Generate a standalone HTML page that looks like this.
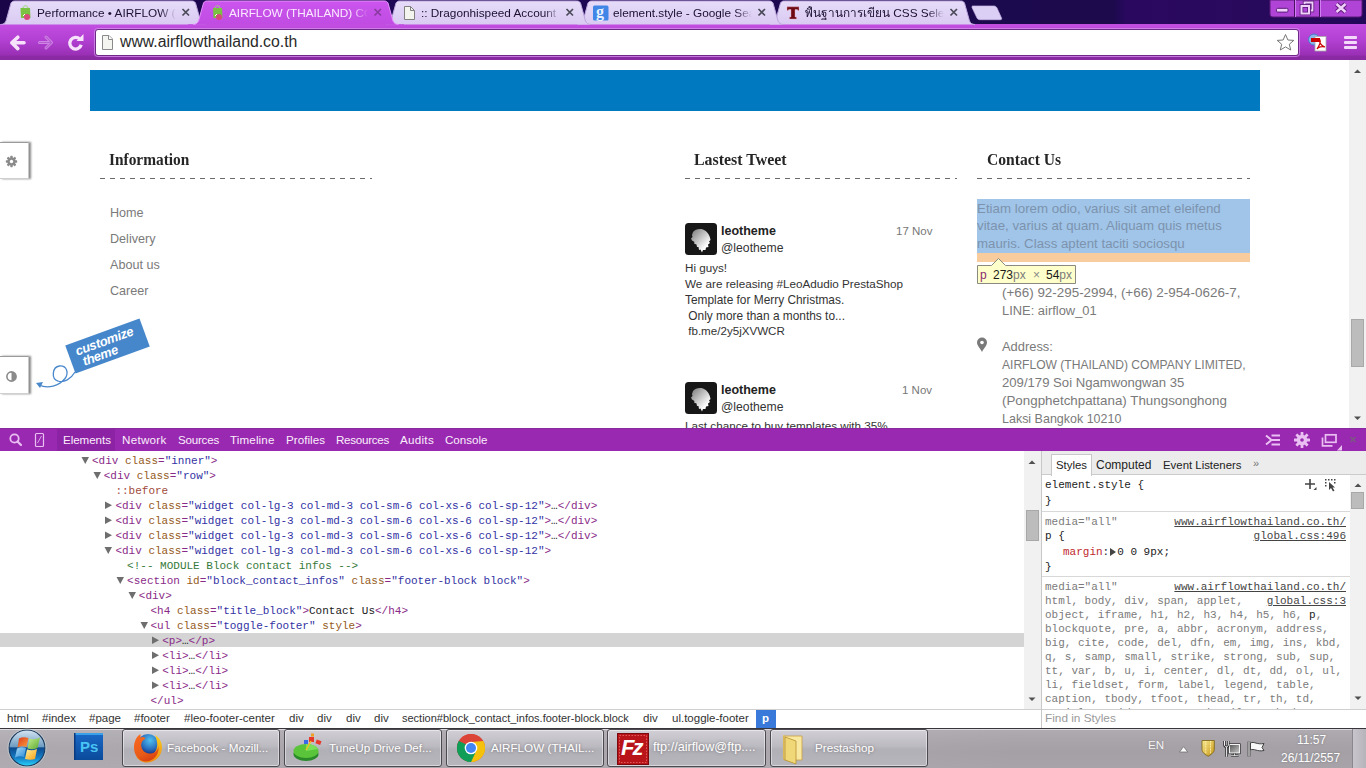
<!DOCTYPE html>
<html><head><meta charset="utf-8">
<style>
*{margin:0;padding:0;box-sizing:border-box}
html,body{width:1366px;height:768px;overflow:hidden;background:#fff;font-family:"Liberation Sans",sans-serif}
.a{position:absolute;white-space:nowrap}
</style></head><body>
<svg class="a" style="left:0;top:0" width="1366" height="60" viewBox="0 0 1366 60">
<defs>
<linearGradient id="gi" x1="0" y1="0" x2="0" y2="1"><stop offset="0" stop-color="#e6dcf9"/><stop offset="1" stop-color="#d9caf2"/></linearGradient>
<linearGradient id="ga" x1="0" y1="0" x2="0" y2="1"><stop offset="0" stop-color="#cb55ee"/><stop offset="1" stop-color="#c04ce2"/></linearGradient>
<linearGradient id="gt" x1="0" y1="0" x2="0" y2="1"><stop offset="0" stop-color="#c24ee2"/><stop offset="0.45" stop-color="#b240d2"/><stop offset="0.85" stop-color="#9a30b6"/><stop offset="0.9" stop-color="#8c2aa4"/><stop offset="1" stop-color="#862a9e"/></linearGradient>
<linearGradient id="fr" x1="0" y1="0" x2="1" y2="0"><stop offset="0" stop-color="#1a0548"/><stop offset="0.3" stop-color="#1e0856"/><stop offset="0.5" stop-color="#1c0752"/><stop offset="0.74" stop-color="#1c0a4e"/><stop offset="0.815" stop-color="#1c0a4c"/><stop offset="0.825" stop-color="#2a0860"/><stop offset="0.92" stop-color="#280a5c"/><stop offset="1" stop-color="#220858"/></linearGradient>
</defs>
<rect x="0" y="0" width="1366" height="25" fill="url(#fr)"/>
<rect x="0" y="24" width="1366" height="36" fill="url(#gt)"/>
<rect x="0" y="59" width="1366" height="1" fill="#8a2aa2"/>
<path d="M770.0,24.5 C773.0,24.5 774.5,23 775.5,21 L780.5,3 C781.5,1.5 782.5,1 784.5,1 L960.5,1 C962.5,1 963.5,1.5 964.5,3 L969.5,21 C970.5,23 972.0,24.5 975.0,24.5 Z" fill="url(#gi)"/><path d="M770.0,24.5 C773.0,24.5 774.5,23 775.5,21 L780.5,3 C781.5,1.5 782.5,1 784.5,1 L960.5,1 C962.5,1 963.5,1.5 964.5,3 L969.5,21 C970.5,23 972.0,24.5 975.0,24.5" fill="none" stroke="#bca6dc" stroke-width="1"/>
<path d="M577.5,24.5 C580.5,24.5 582.0,23 583.0,21 L588,3 C589,1.5 590,1 592,1 L769,1 C771,1 772,1.5 773,3 L778.0,21 C779.0,23 780.5,24.5 783.5,24.5 Z" fill="url(#gi)"/><path d="M577.5,24.5 C580.5,24.5 582.0,23 583.0,21 L588,3 C589,1.5 590,1 592,1 L769,1 C771,1 772,1.5 773,3 L778.0,21 C779.0,23 780.5,24.5 783.5,24.5" fill="none" stroke="#bca6dc" stroke-width="1"/>
<path d="M385.5,24.5 C388.5,24.5 390.0,23 391.0,21 L396,3 C397,1.5 398,1 400,1 L576.5,1 C578.5,1 579.5,1.5 580.5,3 L585.5,21 C586.5,23 588.0,24.5 591.0,24.5 Z" fill="url(#gi)"/><path d="M385.5,24.5 C388.5,24.5 390.0,23 391.0,21 L396,3 C397,1.5 398,1 400,1 L576.5,1 C578.5,1 579.5,1.5 580.5,3 L585.5,21 C586.5,23 588.0,24.5 591.0,24.5" fill="none" stroke="#bca6dc" stroke-width="1"/>
<path d="M0.5,24.5 C3.5,24.5 5.0,23 6.0,21 L11,3 C12,1.5 13,1 15,1 L191.5,1 C193.5,1 194.5,1.5 195.5,3 L200.5,21 C201.5,23 203.0,24.5 206.0,24.5 Z" fill="url(#gi)"/><path d="M0.5,24.5 C3.5,24.5 5.0,23 6.0,21 L11,3 C12,1.5 13,1 15,1 L191.5,1 C193.5,1 194.5,1.5 195.5,3 L200.5,21 C201.5,23 203.0,24.5 206.0,24.5" fill="none" stroke="#bca6dc" stroke-width="1"/>
<rect x="188" y="24.3" width="216" height="2" fill="#c24ee2"/><path d="M193.0,24.5 C196.0,24.5 197.5,23 198.5,21 L203.5,3 C204.5,1.5 205.5,1 207.5,1 L384,1 C386,1 387,1.5 388,3 L393.0,21 C394.0,23 395.5,24.5 398.5,24.5 Z" fill="url(#ga)"/><path d="M193.0,24.5 C196.0,24.5 197.5,23 198.5,21 L203.5,3 C204.5,1.5 205.5,1 207.5,1 L384,1 C386,1 387,1.5 388,3 L393.0,21 C394.0,23 395.5,24.5 398.5,24.5" fill="none" stroke="#e592fa" stroke-width="1"/>

<!-- new tab -->
<path d="M973,6 L994,6 C995.5,6 996.5,7 997,8 L1001.5,18 C1002,19 1001.5,19.7 1000.5,19.7 L980,19.7 C978.5,19.7 977.5,19 977,18 L972,7.5 C971.7,6.7 972,6 973,6 Z" fill="#dccff5" stroke="#c6b4e6" stroke-width="0.7"/>
<!-- window controls -->
<path d="M1270,0 L1362,0 L1362,14 C1362,16 1361,17 1359,17 L1273,17 C1271,17 1270,16 1270,14 Z" fill="#b044d6" stroke="#5a1a78" stroke-width="1"/>
<line x1="1294.5" y1="0" x2="1294.5" y2="17" stroke="#4a1064" stroke-width="1"/>
<line x1="1295.5" y1="0" x2="1295.5" y2="17" stroke="#d080f0" stroke-width="1"/>
<line x1="1319.5" y1="0" x2="1319.5" y2="17" stroke="#4a1064" stroke-width="1"/>
<line x1="1320.5" y1="0" x2="1320.5" y2="17" stroke="#d080f0" stroke-width="1"/>
<rect x="1276.5" y="8.3" width="11.5" height="3.8" rx="1.2" fill="#f0d0fa" stroke="#5a1a78" stroke-width="1"/>
<path d="M1304.5,4.5 L1304.5,2.5 L1312.5,2.5 L1312.5,10.5 L1310.5,10.5" fill="none" stroke="#5a1a78" stroke-width="3.4"/>
<path d="M1304.5,4.5 L1304.5,2.5 L1312.5,2.5 L1312.5,10.5 L1310.5,10.5" fill="none" stroke="#f0d0fa" stroke-width="1.8"/>
<rect x="1301.5" y="6" width="7.5" height="7.5" fill="none" stroke="#5a1a78" stroke-width="3.6"/>
<rect x="1301.5" y="6" width="7.5" height="7.5" fill="none" stroke="#f0d0fa" stroke-width="2"/>
<path d="M1336.5,4 L1345.5,12 M1345.5,4 L1336.5,12" stroke="#5a1a78" stroke-width="4.4"/>
<path d="M1336.5,4 L1345.5,12 M1345.5,4 L1336.5,12" stroke="#f0d0fa" stroke-width="2.6"/>
<!-- omnibox -->
<rect x="94.5" y="28.5" width="1205" height="28" rx="3" fill="none" stroke="#d48cec" stroke-width="1" opacity="0.8"/><rect x="95.5" y="29.5" width="1203" height="26" rx="2.5" fill="#fff" stroke="#6e2886" stroke-width="1"/>
<!-- back -->
<path d="M24,42.8 L12.5,42.8 M17.8,37.2 L11.8,42.8 L17.8,48.6" fill="none" stroke="#f6e2fa" stroke-width="3.6" stroke-linecap="round" stroke-linejoin="round"/>
<!-- forward -->
<path d="M39.5,42.5 L51,42.5 M46,37 L51.5,42.5 L46,48" fill="none" stroke="#cf86e4" stroke-width="3" stroke-linecap="round" stroke-linejoin="round"/>
<path d="M39.5,42.5 L51,42.5 M46,37 L51.5,42.5 L46,48" fill="none" stroke="#b85ed2" stroke-width="1.2" stroke-linecap="round" stroke-linejoin="round"/>
<!-- reload -->
<path d="M79.8,39.2 A5.8,5.8 0 1 0 81.2,44.8" fill="none" stroke="#f6e2fa" stroke-width="3.3"/>
<path d="M76.5,41 L83.5,41 L83.5,34 Z" fill="#f6e2fa"/>
<!-- page icon -->
<path d="M102.5,35.5 L109,35.5 L112.5,39 L112.5,49.5 L102.5,49.5 Z" fill="#f4f4f0" stroke="#8a8a8a" stroke-width="1"/>
<path d="M108.5,35.5 L108.5,39.5 L112.5,39.5" fill="#fff" stroke="#8a8a8a" stroke-width="1"/>
<!-- star -->
<path d="M1285.5,34.5 L1287.9,40 L1293.8,40.4 L1289.3,44.2 L1290.7,50 L1285.5,46.9 L1280.3,50 L1281.7,44.2 L1277.2,40.4 L1283.1,40 Z" fill="#fff" stroke="#777" stroke-width="1"/>
<!-- pdf ext icon -->
<circle cx="1314" cy="39.5" r="5.5" fill="#8ab4e8" stroke="#4a78c8" stroke-width="1"/>
<rect x="1315" y="36.5" width="11" height="14.5" fill="#fff" stroke="#aaa" stroke-width="0.8"/>
<rect x="1311" y="38" width="9" height="4" fill="#c00"/>
<path d="M1317,49 C1319,46 1321,42 1320,40 C1319,42 1321,46 1325,47 C1322,46 1318,47 1317,49 Z" fill="none" stroke="#c00" stroke-width="1.2"/>
<!-- menu -->
<rect x="1344" y="36" width="13" height="3" rx="1" fill="#f4d8fa"/>
<rect x="1344" y="41" width="13" height="3" rx="1" fill="#f4d8fa"/>
<rect x="1344" y="46" width="13" height="3" rx="1" fill="#f4d8fa"/>
<!-- tab favicons -->
<g><path d="M20.5,8 L30,8 L30.5,18 L21,18 Z" fill="#7cc242"/><path d="M23,8 C23,5 28,5 28,8" fill="none" stroke="#9ad870" stroke-width="1"/><circle cx="27" cy="17" r="3" fill="#d84a7a"/><path d="M23,16 L25,14" stroke="#fff" stroke-width="1"/></g>
<g><path d="M213,8 L222,8 L222.5,18 L213.5,18 Z" fill="#7cc242"/><path d="M215,8 C215,5 220,5 220,8" fill="none" stroke="#9ad870" stroke-width="1"/><circle cx="219" cy="17" r="3" fill="#d84a7a"/><path d="M215,16 L217,14" stroke="#fff" stroke-width="1"/></g>
<path d="M404.5,6.5 L410.5,6.5 L414.5,10.5 L414.5,19.5 L404.5,19.5 Z" fill="#f4f4ee" stroke="#808080" stroke-width="1"/>
<path d="M410.5,6.5 L410.5,10.5 L414.5,10.5" fill="none" stroke="#808080" stroke-width="1"/>
<rect x="593" y="5.5" width="15.5" height="15" rx="1.5" fill="#3f86e6"/>
</svg>
<div class="a" style="left:596px;top:3px;font:bold 16px 'Liberation Serif',serif;color:#e8f2ff">g</div>
<svg class="a" style="left:780px;top:0" width="24" height="24"><path d="M7,6.8 L19,6.8 L19,10.5 L18,10.5 L17.3,9.5 L15,9.5 L15,17 L16.5,17 L16.5,19 L9.5,19 L9.5,17 L11,17 L11,9.5 L8.7,9.5 L8,10.5 L7,10.5 Z" fill="#6e0a14" stroke="#e8b0c0" stroke-width="0.4"/></svg>
<style>
.tt{position:absolute;top:6px;height:16px;overflow:hidden;font-size:11.8px;line-height:14px;white-space:nowrap;color:#1b1030;-webkit-mask-image:linear-gradient(90deg,#000 calc(100% - 18px),transparent calc(100% - 2px))}
.tx{position:absolute;top:8px;width:8px;height:8px}
</style>
<div class="tt" style="left:37px;width:141px">Performance • AIRFLOW (THAILAND)</div>
<div class="tt" style="left:229px;width:141px;color:#fbeaff">AIRFLOW (THAILAND) COMPANY</div>
<div class="tt" style="left:421px;width:141px">:: Dragonhispeed Account ::</div>
<div class="tt" style="left:613px;width:141px">element.style - Google Search</div>
<div class="tt" style="left:805px;width:141px">พื้นฐานการเขียน CSS Selector</div>
<svg class="a" style="left:0;top:0" width="1000" height="24">
<path d="M182.5,9 L189,15.5 M189,9 L182.5,15.5" stroke="#4a4a58" stroke-width="1.7"/>
<path d="M374.5,9 L381,15.5 M381,9 L374.5,15.5" stroke="#8a3aa0" stroke-width="1.7"/>
<path d="M566.5,9 L573,15.5 M573,9 L566.5,15.5" stroke="#4a4a58" stroke-width="1.7"/>
<path d="M758.5,9 L765,15.5 M765,9 L758.5,15.5" stroke="#4a4a58" stroke-width="1.7"/>
<path d="M950.5,9 L957,15.5 M957,9 L950.5,15.5" stroke="#4a4a58" stroke-width="1.7"/>
</svg>
<div class="a" style="left:120px;top:33px;font-size:15.8px;line-height:18px;color:#2a2a2a">www.airflowthailand.co.th</div>
<style>
.pg{position:absolute;white-space:nowrap}
.h4{font:bold 15.6px/20px "Liberation Serif",serif;color:#262626;transform:scaleY(1.08);transform-origin:0 100%}
.lk{font-size:12.6px;line-height:16px;color:#7a7a7a}
.tw{font-size:11.7px;line-height:16px;color:#333}
.ct{font-size:12.3px;line-height:18px;color:#7a7a7a}
.dash{position:absolute;height:1px;background:repeating-linear-gradient(90deg,#6a6a6a 0 5px,transparent 5px 10px)}
</style>
<div class="pg" style="left:90px;top:70px;width:1170px;height:41px;background:#0079c1"></div>
<!-- left tool boxes -->
<div class="pg" style="left:0;top:142px;width:29px;height:37px;background:#fff;border-top:1.5px solid #9a9a9a;border-bottom:1px solid #cfcfcf;border-right:1px solid #c8c8c8;box-shadow:2px 0 2px 0 #8a8a8a"></div>
<svg class="pg" style="left:5px;top:155px" width="14" height="14" viewBox="0 0 14 14">
<g fill="#8a8a8a"><circle cx="6.5" cy="6.5" r="4"/>
<rect x="5.3" y="0.8" width="2.4" height="11.4" rx="0.6"/><rect x="0.8" y="5.3" width="11.4" height="2.4" rx="0.6"/>
<rect x="5.3" y="0.8" width="2.4" height="11.4" rx="0.6" transform="rotate(45 6.5 6.5)"/><rect x="5.3" y="0.8" width="2.4" height="11.4" rx="0.6" transform="rotate(-45 6.5 6.5)"/></g>
<circle cx="6.5" cy="6.5" r="1.7" fill="#fff"/></svg>
<div class="pg" style="left:0;top:356px;width:29px;height:38px;background:#fff;border-top:1.5px solid #9a9a9a;border-bottom:1px solid #cfcfcf;border-right:1px solid #c8c8c8;box-shadow:2px 0 2px 0 #8a8a8a"></div>
<svg class="pg" style="left:5px;top:370px" width="14" height="14" viewBox="0 0 14 14">
<circle cx="6.5" cy="6.5" r="4.6" fill="none" stroke="#8a8a8a" stroke-width="1.6"/><path d="M6.5,1.9 A4.6,4.6 0 0 1 6.5,11.1 Z" fill="#8a8a8a"/></svg>
<!-- customize theme -->
<div class="pg" style="left:68px;top:331px;width:79px;height:30px;background:#4687cc;transform:rotate(-20deg)"></div><div class="pg" style="left:73px;top:331px;width:79px;height:30px;transform:rotate(-20deg);color:#fff;font:bold italic 13px/12px 'Liberation Sans',sans-serif;padding:2px 0 0 3px;letter-spacing:-0.3px">customize<br>&nbsp;theme</div>
<svg class="pg" style="left:30px;top:360px" width="50" height="35" viewBox="30 360 50 35">
<path d="M75,372 C71,379 64,383 58,381 C51,379 52,367 59.5,366 C67,365.5 69,373 65,378.5 C59,386 48,389 39,385" fill="none" stroke="#4a88cc" stroke-width="1.3"/>
<path d="M36,383 L43,382 L40,388 Z" fill="#4a88cc"/>
</svg>
<!-- Information -->
<div class="pg h4" style="left:109px;top:150px;font-size:15.4px">Information</div>
<div class="dash" style="left:100px;top:178px;width:272px"></div>
<div class="pg lk" style="left:110px;top:205px">Home</div>
<div class="pg lk" style="left:110px;top:231px">Delivery</div>
<div class="pg lk" style="left:110px;top:257px">About us</div>
<div class="pg lk" style="left:110px;top:283px">Career</div>
<!-- Tweets -->
<div class="pg h4" style="left:694px;top:150px;font-size:15.9px">Lastest Tweet</div>
<div class="dash" style="left:685px;top:178px;width:272px"></div>
<svg class="pg" style="left:685px;top:223px" width="32" height="32" viewBox="0 0 32 32">
<defs><linearGradient id="lion" x1="0.1" y1="0.1" x2="0.7" y2="0.8"><stop offset="0" stop-color="#8a8a8a"/><stop offset="1" stop-color="#fff"/></linearGradient></defs>
<rect width="32" height="32" rx="3.5" fill="#171717"/>
<path d="M8,9 C10,6.5 14,5.5 18,6.5 C22,8 25,12 25.5,17 L24,18.5 L25,20 L23,21.5 L23.5,24 L21,24.5 L20.5,27 L18,27 L17,29.5 L15.5,26.5 L14,27 L13.5,24 L12,24 L11.5,21.5 L9,20.5 L9.5,19 L7,17.5 L6,15.5 L7.5,14 L7,12 Z" fill="url(#lion)"/>
</svg>
<div class="pg" style="left:721px;top:223px;font:bold 12.5px/16px 'Liberation Sans',sans-serif;color:#222">leotheme</div>
<div class="pg tw" style="left:721px;top:240px;font-size:12.2px">@leotheme</div>
<div class="pg" style="left:896px;top:223px;font-size:11.5px;line-height:16px;color:#777">17 Nov</div>
<div class="pg tw" style="left:685px;top:260px;font-size:11.63px">Hi guys!</div><div class="pg tw" style="left:685px;top:276px;font-size:11.7px">We are releasing #LeoAdudio PrestaShop</div><div class="pg tw" style="left:685px;top:292px;font-size:11.9px">Template for Merry Christmas.</div><div class="pg tw" style="left:685px;top:308px;font-size:11.9px">&nbsp;Only more than a months to...</div><div class="pg tw" style="left:685px;top:323px;font-size:11.6px">&nbsp;fb.me/2y5jXVWCR</div>
<svg class="pg" style="left:685px;top:382px" width="32" height="32" viewBox="0 0 32 32">
<rect width="32" height="32" rx="3.5" fill="#171717"/>
<path d="M8,9 C10,6.5 14,5.5 18,6.5 C22,8 25,12 25.5,17 L24,18.5 L25,20 L23,21.5 L23.5,24 L21,24.5 L20.5,27 L18,27 L17,29.5 L15.5,26.5 L14,27 L13.5,24 L12,24 L11.5,21.5 L9,20.5 L9.5,19 L7,17.5 L6,15.5 L7.5,14 L7,12 Z" fill="url(#lion)"/>
</svg>
<div class="pg" style="left:721px;top:382px;font:bold 12.5px/16px 'Liberation Sans',sans-serif;color:#222">leotheme</div>
<div class="pg tw" style="left:721px;top:399px;font-size:12.2px">@leotheme</div>
<div class="pg" style="left:902px;top:382px;font-size:11.5px;line-height:16px;color:#777">1 Nov</div>
<div class="pg tw" style="left:685px;top:418px">Last chance to buy templates with 35%</div>
<!-- Contact -->
<div class="pg h4" style="left:987px;top:150px;font-size:15.6px">Contact Us</div>
<div class="dash" style="left:977px;top:178px;width:273px"></div>
<div class="pg" style="left:977px;top:199px;width:273px;height:54px;background:#a0c5e9"></div>
<div class="pg" style="left:977px;top:253px;width:273px;height:9px;background:#f8cc9c"></div>
<div class="pg ct" style="left:977px;top:200px;font-size:13.34px;color:#7d93ad">Etiam lorem odio, varius sit amet eleifend</div><div class="pg ct" style="left:977px;top:217px;font-size:13.28px;color:#7d93ad">vitae, varius at quam. Aliquam quis metus</div><div class="pg ct" style="left:977px;top:235px;font-size:13.25px;color:#7d93ad">mauris. Class aptent taciti sociosqu</div>
<div class="pg ct" style="left:1002px;top:284px;font-size:13.41px">(+66) 92-295-2994, (+66) 2-954-0626-7,</div><div class="pg ct" style="left:1002px;top:302px;font-size:12.92px">LINE: airflow_01</div>
<svg class="pg" style="left:976px;top:337px" width="12" height="16" viewBox="0 0 12 16">
<path d="M6,15 C4,11 1,8.5 1,5.5 A5,5 0 0 1 11,5.5 C11,8.5 8,11 6,15 Z" fill="#7a7a7a"/><circle cx="6" cy="5.5" r="1.8" fill="#fff"/></svg>
<div class="pg ct" style="left:1002px;top:338px;font-size:12.9px">Address:</div><div class="pg ct" style="left:1002px;top:356px;font-size:12.07px">AIRFLOW (THAILAND) COMPANY LIMITED,</div><div class="pg ct" style="left:1002px;top:374px;font-size:13.14px">209/179 Soi Ngamwongwan 35</div><div class="pg ct" style="left:1002px;top:392px;font-size:13.36px">(Pongphetchpattana) Thungsonghong</div><div class="pg ct" style="left:1002px;top:410px;font-size:12.49px">Laksi Bangkok 10210</div>
<!-- tooltip -->
<svg class="pg" style="left:976px;top:257px" width="101" height="28" viewBox="976 257 101 28">
<path d="M977.5,265.5 L991.5,265.5 L998.5,258.5 L1005.5,265.5 L1075.5,265.5 L1075.5,283.5 L977.5,283.5 Z" fill="#ffffcb" stroke="#8a8a80" stroke-width="1"/>
</svg>
<div class="pg" style="left:980px;top:267px;font-size:12px;line-height:16px;color:#8a2a70">p</div>
<div class="pg" style="left:993px;top:267px;font-size:12px;line-height:16px;color:#1a1a1a">273<span style="color:#7a7a7a">px</span></div>
<div class="pg" style="left:1033px;top:267px;font-size:12px;line-height:16px;color:#8a8a8a">×</div>
<div class="pg" style="left:1046px;top:267px;font-size:12px;line-height:16px;color:#1a1a1a">54<span style="color:#7a7a7a">px</span></div>
<!-- page scrollbar -->
<div class="pg" style="left:1349px;top:60px;width:17px;height:368px;background:#f1f1f1"></div>
<div class="pg" style="left:1351px;top:319px;width:13px;height:48px;background:#bcbcbc;border:1px solid #a8a8a8"></div>
<svg class="pg" style="left:1349px;top:60px" width="17" height="368">
<path d="M5,13 L12,13 L8.5,9.5 Z" fill="#505050"/>
<path d="M5,356.5 L12,356.5 L8.5,360 Z" fill="#505050"/>
</svg>
<style>
.er{position:absolute;white-space:nowrap;font:11px/15px "Liberation Mono",monospace;color:#222}
.t{color:#8a2a88}.n{color:#955a22}.v{color:#3232a4}.c{color:#367a3a}.ps{color:#a04a3a}.k{color:#222}
.dtt{position:absolute;top:432px;font-size:12px;line-height:15px;color:#fbeefc;white-space:nowrap}
.sl{position:absolute;white-space:nowrap;font:11px/14px "Liberation Mono",monospace;color:#222}
.gr{color:#7a7a7a}
.lnk{position:absolute;white-space:nowrap;font:11px/14px "Liberation Mono",monospace;color:#444;text-decoration:underline;text-align:right}
.bc{position:absolute;top:711px;font-size:11.5px;line-height:15px;color:#333;white-space:nowrap}
</style>
<!-- devtools toolbar -->
<div class="a" style="left:0;top:428px;width:1366px;height:23px;background:#9829b0;border-top:1px solid #8a2aa0"></div>
<div class="a" style="left:57px;top:429px;width:58px;height:22px;background:#8c22a4"></div>
<svg class="a" style="left:0;top:428px" width="60" height="23">
<circle cx="14.5" cy="10.5" r="4.2" fill="none" stroke="#eac0f2" stroke-width="1.8"/>
<path d="M17.5,13.5 L21,17" stroke="#eac0f2" stroke-width="2.2" stroke-linecap="round"/>
<rect x="35.5" y="5.5" width="8" height="13" rx="1" fill="none" stroke="#eac0f2" stroke-width="1.2"/>
<path d="M37.5,15 L41.5,8" stroke="#eac0f2" stroke-width="0.8"/>
</svg>
<div class="dtt" style="left:63px;font-size:11.6px;letter-spacing:-0.05px">Elements</div>
<div class="dtt" style="left:122px;font-size:11.6px;letter-spacing:0.28px">Network</div>
<div class="dtt" style="left:178px;font-size:11.6px;letter-spacing:-0.22px">Sources</div>
<div class="dtt" style="left:230px;font-size:11.6px;letter-spacing:0.14px">Timeline</div>
<div class="dtt" style="left:286px;font-size:11.6px;letter-spacing:0.04px">Profiles</div>
<div class="dtt" style="left:336px;font-size:11.6px;letter-spacing:-0.27px">Resources</div>
<div class="dtt" style="left:400px;font-size:11.6px;letter-spacing:0.29px">Audits</div>
<div class="dtt" style="left:445px;font-size:11.6px;letter-spacing:-0.01px">Console</div>
<svg class="a" style="left:1260px;top:428px" width="106" height="23">
<path d="M6,7.5 L11.5,12 L6,16.5" fill="none" stroke="#eac0f2" stroke-width="2"/>
<rect x="11.5" y="6.5" width="8.5" height="2" fill="#eac0f2"/><rect x="11.5" y="11" width="8.5" height="2" fill="#eac0f2"/><rect x="11.5" y="15.5" width="8.5" height="2" fill="#eac0f2"/>
<g fill="#eac0f2" transform="translate(42,12)"><circle r="5.2"/>
<rect x="-1.4" y="-8" width="2.8" height="16" rx="0.5"/><rect x="-8" y="-1.4" width="16" height="2.8" rx="0.5"/>
<rect x="-1.4" y="-8" width="2.8" height="16" rx="0.5" transform="rotate(45)"/><rect x="-1.4" y="-8" width="2.8" height="16" rx="0.5" transform="rotate(-45)"/>
<circle r="1.8" fill="#9829b0"/></g>
<rect x="65.5" y="6.8" width="10.5" height="7.5" fill="none" stroke="#eac0f2" stroke-width="1.7"/>
<path d="M62.5,9.5 L62.5,17.8 L72.5,17.8" fill="none" stroke="#eac0f2" stroke-width="1.7"/>
<path d="M77,22.5 L82,22.5 L82,17 Z" fill="#eac0f2"/>
<path d="M90.5,9 L95.5,14 M95.5,9 L90.5,14" stroke="#7a5a80" stroke-width="1.4"/>
</svg>
<!-- elements pane -->
<div class="a" style="left:0;top:633px;width:1024px;height:14px;background:#d4d4d4"></div>
<div class="er" style="top:454px;left:92.0px"><span class="t">&lt;div</span> <span class="n">class</span><span class="t">=</span><span class="v">"inner"</span><span class="t">&gt;</span></div>
<svg class="a" style="left:81.0px;top:455.5px" width="9" height="9"><path d="M0.5,1 L8,1 L4.25,8 Z" fill="#6e6e6e"/></svg>
<div class="er" style="top:469px;left:103.7px"><span class="t">&lt;div</span> <span class="n">class</span><span class="t">=</span><span class="v">"row"</span><span class="t">&gt;</span></div>
<svg class="a" style="left:92.7px;top:470.5px" width="9" height="9"><path d="M0.5,1 L8,1 L4.25,8 Z" fill="#6e6e6e"/></svg>
<div class="er" style="top:484px;left:115.4px"><span class="ps">::before</span></div>
<div class="er" style="top:499px;left:115.4px"><span class="t">&lt;div</span> <span class="n">class</span><span class="t">=</span><span class="v">"widget col-lg-3 col-md-3 col-sm-6 col-xs-6 col-sp-12"</span><span class="t">&gt;</span><span class="k">…</span><span class="t">&lt;/div&gt;</span></div>
<svg class="a" style="left:104.4px;top:500.5px" width="9" height="9"><path d="M1,0.5 L8,4.25 L1,8 Z" fill="#6e6e6e"/></svg>
<div class="er" style="top:514px;left:115.4px"><span class="t">&lt;div</span> <span class="n">class</span><span class="t">=</span><span class="v">"widget col-lg-3 col-md-3 col-sm-6 col-xs-6 col-sp-12"</span><span class="t">&gt;</span><span class="k">…</span><span class="t">&lt;/div&gt;</span></div>
<svg class="a" style="left:104.4px;top:515.5px" width="9" height="9"><path d="M1,0.5 L8,4.25 L1,8 Z" fill="#6e6e6e"/></svg>
<div class="er" style="top:529px;left:115.4px"><span class="t">&lt;div</span> <span class="n">class</span><span class="t">=</span><span class="v">"widget col-lg-3 col-md-3 col-sm-6 col-xs-6 col-sp-12"</span><span class="t">&gt;</span><span class="k">…</span><span class="t">&lt;/div&gt;</span></div>
<svg class="a" style="left:104.4px;top:530.5px" width="9" height="9"><path d="M1,0.5 L8,4.25 L1,8 Z" fill="#6e6e6e"/></svg>
<div class="er" style="top:544px;left:115.4px"><span class="t">&lt;div</span> <span class="n">class</span><span class="t">=</span><span class="v">"widget col-lg-3 col-md-3 col-sm-6 col-xs-6 col-sp-12"</span><span class="t">&gt;</span></div>
<svg class="a" style="left:104.4px;top:545.5px" width="9" height="9"><path d="M0.5,1 L8,1 L4.25,8 Z" fill="#6e6e6e"/></svg>
<div class="er" style="top:559px;left:127.1px"><span class="c">&lt;!-- MODULE Block contact infos --&gt;</span></div>
<div class="er" style="top:574px;left:127.1px"><span class="t">&lt;section</span> <span class="n">id</span><span class="t">=</span><span class="v">"block_contact_infos"</span> <span class="n">class</span><span class="t">=</span><span class="v">"footer-block block"</span><span class="t">&gt;</span></div>
<svg class="a" style="left:116.1px;top:575.5px" width="9" height="9"><path d="M0.5,1 L8,1 L4.25,8 Z" fill="#6e6e6e"/></svg>
<div class="er" style="top:589px;left:138.8px"><span class="t">&lt;div</span><span class="t">&gt;</span></div>
<svg class="a" style="left:127.8px;top:590.5px" width="9" height="9"><path d="M0.5,1 L8,1 L4.25,8 Z" fill="#6e6e6e"/></svg>
<div class="er" style="top:604px;left:150.5px"><span class="t">&lt;h4</span> <span class="n">class</span><span class="t">=</span><span class="v">"title_block"</span><span class="t">&gt;</span><span class="k">Contact Us</span><span class="t">&lt;/h4&gt;</span></div>
<div class="er" style="top:619px;left:150.5px"><span class="t">&lt;ul</span> <span class="n">class</span><span class="t">=</span><span class="v">"toggle-footer"</span> <span class="n">style</span><span class="t">&gt;</span></div>
<svg class="a" style="left:139.5px;top:620.5px" width="9" height="9"><path d="M0.5,1 L8,1 L4.25,8 Z" fill="#6e6e6e"/></svg>
<div class="er" style="top:634px;left:162.2px"><span class="t">&lt;p</span><span class="t">&gt;</span><span class="k">…</span><span class="t">&lt;/p&gt;</span></div>
<svg class="a" style="left:151.2px;top:635.5px" width="9" height="9"><path d="M1,0.5 L8,4.25 L1,8 Z" fill="#6e6e6e"/></svg>
<div class="er" style="top:649px;left:162.2px"><span class="t">&lt;li</span><span class="t">&gt;</span><span class="k">…</span><span class="t">&lt;/li&gt;</span></div>
<svg class="a" style="left:151.2px;top:650.5px" width="9" height="9"><path d="M1,0.5 L8,4.25 L1,8 Z" fill="#6e6e6e"/></svg>
<div class="er" style="top:664px;left:162.2px"><span class="t">&lt;li</span><span class="t">&gt;</span><span class="k">…</span><span class="t">&lt;/li&gt;</span></div>
<svg class="a" style="left:151.2px;top:665.5px" width="9" height="9"><path d="M1,0.5 L8,4.25 L1,8 Z" fill="#6e6e6e"/></svg>
<div class="er" style="top:679px;left:162.2px"><span class="t">&lt;li</span><span class="t">&gt;</span><span class="k">…</span><span class="t">&lt;/li&gt;</span></div>
<svg class="a" style="left:151.2px;top:680.5px" width="9" height="9"><path d="M1,0.5 L8,4.25 L1,8 Z" fill="#6e6e6e"/></svg>
<div class="er" style="top:694px;left:150.5px"><span class="t">&lt;/ul&gt;</span></div><!-- elements scrollbar -->
<div class="a" style="left:1024px;top:451px;width:17px;height:258px;background:#f1f1f1"></div>
<div class="a" style="left:1026px;top:510px;width:13px;height:31px;background:#bcbcbc;border:1px solid #a8a8a8"></div>
<svg class="a" style="left:1024px;top:451px" width="17" height="258">
<path d="M4.5,13 L11.5,13 L8,9.5 Z" fill="#505050"/>
<path d="M4.5,246.5 L11.5,246.5 L8,250 Z" fill="#505050"/>
</svg>
<div class="a" style="left:1041px;top:451px;width:1px;height:278px;background:#c8c8c8"></div>
<!-- styles pane -->
<div class="a" style="left:1042px;top:451px;width:324px;height:24px;background:#ececec;border-bottom:1px solid #cbcbcb"></div>
<div class="a" style="left:1051px;top:454px;width:41px;height:22px;background:#fff;border:1px solid #c8c8c8;border-bottom:none"></div>
<div class="a" style="left:1056px;top:458px;font-size:11.4px;line-height:15px;color:#222">Styles</div>
<div class="a" style="left:1096px;top:458px;font-size:12px;line-height:15px;color:#222">Computed</div>
<div class="a" style="left:1163px;top:458px;font-size:11.4px;line-height:15px;color:#222">Event Listeners</div>
<div class="a" style="left:1253px;top:456px;font-size:11px;line-height:15px;color:#777">»</div>
<div class="sl" style="left:1045px;top:478px">element.style {</div>
<div class="sl" style="left:1045px;top:494px">}</div>
<svg class="a" style="left:1300px;top:476px" width="40" height="16">
<path d="M10,3 L10,13 M5,8 L15,8" stroke="#444" stroke-width="1.6"/>
<path d="M13.5,14 L16.5,14 L16.5,11 Z" fill="#444"/>
<g fill="#444"><rect x="25" y="3" width="1.5" height="1.5"/><rect x="28" y="3" width="1.5" height="1.5"/><rect x="31" y="3" width="1.5" height="1.5"/><rect x="34" y="3" width="1.5" height="1.5"/><rect x="25" y="6" width="1.5" height="1.5"/><rect x="25" y="9" width="1.5" height="1.5"/><rect x="34" y="6" width="1.5" height="1.5"/></g>
<path d="M29,6 L29,14 L31,12 L33,15.5 L34.5,14.5 L32.5,11.5 L35,11.5 Z" fill="#444"/>
</svg>
<div class="a" style="left:1042px;top:511px;width:308px;height:1px;background:#d8d8d8"></div>
<div class="sl gr" style="left:1045px;top:515px">media="all"</div>
<div class="lnk" style="right:20px;top:515px">www.airflowthailand.co.th/</div>
<div class="sl" style="left:1045px;top:529px">p {</div>
<div class="lnk" style="right:20px;top:529px">global.css:496</div>
<div class="sl" style="left:1045px;top:545px;padding-left:18px"><span style="color:#c0282e">margin</span>:<span style="display:inline-block;width:0;height:0;border-left:6px solid #444;border-top:4px solid transparent;border-bottom:4px solid transparent;margin:0 1px -1px 1px"></span>0 0 9px;</div>
<div class="sl" style="left:1045px;top:560px">}</div>
<div class="a" style="left:1042px;top:576px;width:308px;height:1px;background:#d8d8d8"></div>
<div class="sl gr" style="left:1045px;top:580px">media="all"</div>
<div class="lnk" style="right:20px;top:580px">www.airflowthailand.co.th/</div>
<div class="lnk" style="right:20px;top:594px">global.css:3</div>
<div class="sl gr" style="left:1045px;top:594px">html, body, div, span, applet,<br>object, iframe, h1, h2, h3, h4, h5, h6, <span style="color:#222">p</span>,<br>blockquote, pre, a, abbr, acronym, address,<br>big, cite, code, del, dfn, em, img, ins, kbd,<br>q, s, samp, small, strike, strong, sub, sup,<br>tt, var, b, u, i, center, dl, dt, dd, ol, ul,<br>li, fieldset, form, label, legend, table,<br>caption, tbody, tfoot, thead, tr, th, td,<br>article, aside, canvas, details, embed,</div>
<!-- styles scrollbar -->
<div class="a" style="left:1350px;top:475px;width:16px;height:234px;background:#f1f1f1"></div>
<div class="a" style="left:1351px;top:492px;width:13px;height:17px;background:#bcbcbc;border:1px solid #a8a8a8"></div>
<svg class="a" style="left:1350px;top:475px" width="16" height="234">
<path d="M4.5,12 L11.5,12 L8,8.5 Z" fill="#505050"/>
<path d="M4.5,221.5 L11.5,221.5 L8,225 Z" fill="#505050"/>
</svg>
<div class="a" style="left:1042px;top:709px;width:324px;height:19px;background:#fff;border-top:1px solid #cfcfcf"></div>
<div class="a" style="left:1045px;top:711px;font-size:11.8px;line-height:15px;color:#9a9a9a">Find in Styles</div>
<!-- breadcrumbs -->
<div class="a" style="left:0;top:709px;width:1041px;height:19px;background:#fff;border-top:1px solid #cfcfcf"></div>
<div class="bc" style="left:7px">html</div>
<div class="bc" style="left:42px">#index</div>
<div class="bc" style="left:89px">#page</div>
<div class="bc" style="left:134px">#footer</div>
<div class="bc" style="left:184px">#leo-footer-center</div>
<div class="bc" style="left:289px">div</div>
<div class="bc" style="left:317px">div</div>
<div class="bc" style="left:346px">div</div>
<div class="bc" style="left:374px">div</div>
<div class="bc" style="left:402px;font-size:11px">section#block_contact_infos.footer-block.block</div>
<div class="bc" style="left:643px">div</div>
<div class="bc" style="left:672px">ul.toggle-footer</div>
<div class="a" style="left:756px;top:710px;width:20px;height:18px;background:#3879d9"></div>
<div class="bc" style="left:762px;color:#fff;font-weight:bold">p</div>
<style>
.tb{position:absolute;top:729px;height:38px;border:1px solid #4c4a50;border-radius:3px;background:linear-gradient(#d2d0d6,#bcbac1 45%,#b2b0b7 55%,#b8b6bd);box-shadow:inset 0 0 0 1px rgba(255,255,255,0.45)}
.tbt{position:absolute;top:740px;font-size:11.7px;line-height:15px;color:#fff;white-space:nowrap;text-shadow:0 0 3px rgba(60,60,60,0.6)}
</style>
<div class="a" style="left:0;top:728px;width:1366px;height:40px;background:linear-gradient(90deg,rgba(255,255,255,0.06),rgba(0,0,0,0) 30%,rgba(255,255,255,0.05) 55%,rgba(0,0,0,0.02) 75%),linear-gradient(#b2aeb4,#a9a5ab 40%,#a7a3a9 60%,#aaa6ac);border-top:1px solid #38363a;box-shadow:inset 0 1px 0 #dcdade"></div>
<!-- start orb -->
<svg class="a" style="left:6px;top:728px" width="42" height="40" viewBox="0 0 42 40">
<defs>
<linearGradient id="orb" x1="0" y1="0" x2="0" y2="1"><stop offset="0" stop-color="#d6e6f2"/><stop offset="0.46" stop-color="#6e9cc2"/><stop offset="0.5" stop-color="#0c4a8e"/><stop offset="0.78" stop-color="#1680c8"/><stop offset="1" stop-color="#2ad4fa"/></linearGradient>
<linearGradient id="wr" x1="0" y1="0" x2="1" y2="1"><stop offset="0" stop-color="#e03a1a"/><stop offset="1" stop-color="#f8a040"/></linearGradient>
<linearGradient id="wg" x1="0" y1="0" x2="1" y2="1"><stop offset="0" stop-color="#c8f090"/><stop offset="1" stop-color="#5aa830"/></linearGradient>
<linearGradient id="wb" x1="0" y1="0" x2="1" y2="1"><stop offset="0" stop-color="#a8dcf8"/><stop offset="1" stop-color="#2a8ad8"/></linearGradient>
<linearGradient id="wy" x1="0" y1="0" x2="1" y2="1"><stop offset="0" stop-color="#fff0a0"/><stop offset="1" stop-color="#f8a010"/></linearGradient>
</defs>
<circle cx="21" cy="20" r="18" fill="url(#orb)" stroke="#1c3a5c" stroke-width="1.2"/>
<circle cx="21" cy="20" r="19" fill="none" stroke="#d8e4ec" stroke-width="0.8" opacity="0.7"/>
<path d="M13,10.5 C16,9 19,9 22.5,10 L20.5,19 C17.5,18 14.5,18 11.5,19.5 Z" fill="url(#wr)"/>
<path d="M23.5,10.5 C26.5,11.5 30,11.5 34,9.5 L31.5,20 C28,21.5 25,21.5 21.5,20.5 Z" fill="url(#wg)"/>
<path d="M11,20.5 C14,19 17,19 20,20 L18,29 C15,28 12,28 9,29.5 Z" fill="url(#wb)"/>
<path d="M21,21.5 C24.5,22.5 27.5,22.5 31,21 L29,31 C26,32 23,32 19,31 Z" fill="url(#wy)"/>
</svg>
<!-- PS -->
<svg class="a" style="left:74px;top:732px" width="30" height="30">
<defs><linearGradient id="ps" x1="0" y1="0" x2="0" y2="1"><stop offset="0" stop-color="#1a6ac8"/><stop offset="1" stop-color="#0a4a9a"/></linearGradient></defs>
<rect x="0" y="1" width="29" height="27" fill="url(#ps)"/>
<rect x="0" y="1" width="29" height="2" fill="#3aa0e8"/>
<rect x="0" y="1" width="1.5" height="27" fill="#0a3a80"/>
</svg>
<div class="a" style="left:80px;top:738px;font:bold 15px/18px 'Liberation Sans',sans-serif;color:#48c4f4">Ps</div>
<!-- buttons -->
<div class="tb" style="left:122px;width:158px"></div>
<div class="tb" style="left:284px;width:158px"></div>
<div class="tb" style="left:446px;width:158px"></div>
<div class="tb" style="left:607px;width:159px"></div>
<div class="tb" style="left:770px;width:158px"></div>
<!-- firefox icon -->
<svg class="a" style="left:131px;top:732px" width="32" height="32" viewBox="0 0 32 32">
<defs>
<radialGradient id="ffg" cx="0.6" cy="0.3" r="0.7"><stop offset="0" stop-color="#50c0f0"/><stop offset="0.6" stop-color="#2a70c0"/><stop offset="1" stop-color="#1a2a78"/></radialGradient>
<linearGradient id="ffo" x1="0.2" y1="0" x2="0.6" y2="1"><stop offset="0" stop-color="#f86a20"/><stop offset="0.7" stop-color="#e85a18"/><stop offset="1" stop-color="#d84010"/></linearGradient>
<linearGradient id="ffy" x1="0" y1="0" x2="0" y2="1"><stop offset="0" stop-color="#f8d020"/><stop offset="1" stop-color="#f08a10"/></linearGradient>
</defs>
<circle cx="17" cy="12.5" r="10.5" fill="url(#ffg)"/>
<path d="M24,3 C29,6 31,11 31,15.5 C31,24 24,30.5 16,30.5 C11,30.5 7,28 5,24 C9,27 15,27.5 20,24 C25,21 27,15 26,10 C25.5,7 25,5 24,3 Z" fill="url(#ffy)"/>
<path d="M3,15.5 C3,9 6,4 9.5,2 L9.5,6 C11,4.5 13,5 14.5,6.5 C11.5,8 9.5,11 10.5,15 C11.5,19.5 15.5,22 20,21.5 C24,21 27,18 27.5,14 C28.5,20 25,27 18,29 C10,31 3,25 3,15.5 Z" fill="url(#ffo)"/>
</svg>
<div class="tbt" style="left:167px">Facebook - Mozill...</div>
<!-- tuneup icon -->
<svg class="a" style="left:292px;top:732px" width="34" height="32" viewBox="0 0 34 32">
<ellipse cx="14" cy="22" rx="12.5" ry="7" fill="#2a8a2a"/>
<ellipse cx="14" cy="19" rx="12.5" ry="7" fill="#5ac43a"/>
<path d="M14,19 L14,12 A12.5,7 0 0 1 26,17 Z" fill="#7ae05a"/>
<rect x="17" y="5" width="5" height="5" fill="#e83a2a"/><rect x="24" y="8" width="5" height="4" fill="#e83a2a" transform="rotate(20 26 10)"/>
<rect x="12" y="8" width="4" height="4" fill="#3a6ae8"/><rect x="19" y="1.5" width="3" height="3" fill="#f0a020"/>
<path d="M14,18 L19,9" stroke="#f0c020" stroke-width="1.5"/>
</svg>
<div class="tbt" style="left:329px">TuneUp Drive Def...</div>
<!-- chrome icon -->
<svg class="a" style="left:456px;top:733px" width="30" height="30" viewBox="-15 -15 30 30">
<circle r="14" fill="#db4437"/>
<path d="M0,0 L-12.12,7 A14,14 0 0 1 -12.12,-7 A14,14 0 0 1 12.12,-7 Z" fill="#db4437"/>
<path d="M-12.12,-7 A14,14 0 0 0 0,14 L7,2 Z" fill="#0f9d58"/>
<path d="M12.12,-7 A14,14 0 0 1 0,14 L5,1 Z" fill="#f4c20d"/>
<path d="M0,-6 L12.12,-7 A14,14 0 0 1 0,14 L5.2,3 A6,6 0 0 0 0,-6 Z" fill="#f4c20d"/>
<path d="M-5.2,3 L-12.12,-7 A14,14 0 0 0 0,14 L5.2,3 A6,6 0 0 1 -5.2,3 Z" fill="#0f9d58"/>
<circle r="6.3" fill="#fff"/>
<circle r="5" fill="#4285f4"/>
</svg>
<div class="tbt" style="left:491px">AIRFLOW (THAIL...</div>
<!-- filezilla icon -->
<svg class="a" style="left:617px;top:733px" width="32" height="32">
<rect x="0.5" y="0.5" width="31" height="31" fill="#b8141a" stroke="#7a0a0e"/>
<rect x="2.5" y="2.5" width="27" height="27" fill="none" stroke="#e05a5a" stroke-dasharray="1.5 1.5" stroke-width="1"/>
</svg>
<div class="a" style="left:621px;top:735px;font:bold italic 22px/26px 'Liberation Sans',sans-serif;color:#fff;letter-spacing:-2px">Fz</div>
<div class="tbt" style="left:653px;font-size:12.7px">ftp://airflow@ftp....</div>
<!-- folder icon -->
<svg class="a" style="left:780px;top:733px" width="34" height="32" viewBox="0 0 34 32">
<path d="M3,2 L14,6 L14,30 L3,26 Z" fill="#e8c860"/>
<path d="M4,3 L22,3 L22,27 L4,27 Z" fill="#f8e8a0" stroke="#c8a040" stroke-width="0.8"/>
<path d="M5,4 L16,8 L16,31 L5,27 Z" fill="#f0d878" stroke="#b89030" stroke-width="0.8"/>
</svg>
<div class="tbt" style="left:815px">Prestashop</div>
<!-- tray -->
<div class="a" style="left:1148px;top:737px;font-size:11.6px;line-height:15px;color:#f4f4f4;text-shadow:0 0 2px rgba(80,80,80,0.4)">EN</div>
<svg class="a" style="left:1170px;top:728px" width="110" height="40">
<defs><linearGradient id="shg" x1="0" y1="0" x2="1" y2="1"><stop offset="0" stop-color="#f8e890"/><stop offset="1" stop-color="#c89818"/></linearGradient>
<linearGradient id="mon" x1="0" y1="0" x2="1" y2="1"><stop offset="0" stop-color="#555"/><stop offset="1" stop-color="#c8c8c8"/></linearGradient></defs>
<path d="M9.5,24 L17.7,24 L13.6,18.6 Z" fill="#fafafa" stroke="#666" stroke-width="0.7"/>
<path d="M32,12.5 L44.3,12.5 L44.3,21.5 C44.3,24.5 40.5,27 38.15,28.2 C35.8,27 32,24.5 32,21.5 Z" fill="url(#shg)" stroke="#7a6010" stroke-width="0.8"/>
<path d="M35.8,13 L35.8,25.5 M40.5,13 L40.5,25.5" stroke="#fff4b0" stroke-width="1" stroke-dasharray="1 0.6"/>
<rect x="59.5" y="16.5" width="10" height="8.5" fill="url(#mon)" stroke="#222" stroke-width="2.2"/>
<rect x="59.5" y="16.5" width="10" height="8.5" fill="url(#mon)" stroke="#f4f4f4" stroke-width="1"/>
<path d="M61,27.8 L68.5,27.8 M64.7,25.5 L64.7,27.8" stroke="#222" stroke-width="2.4"/>
<path d="M61,27.8 L68.5,27.8 M64.7,25.5 L64.7,27.8" stroke="#f4f4f4" stroke-width="1"/>
<path d="M54.5,13 L54.5,17 C54.5,19.3 58.3,19.3 58.3,17 L58.3,13 M56.4,19 L56.4,28.8" fill="none" stroke="#222" stroke-width="2.4"/>
<path d="M54.5,13 L54.5,17 C54.5,19.3 58.3,19.3 58.3,17 L58.3,13 M56.4,19 L56.4,28.8" fill="none" stroke="#f4f4f4" stroke-width="1"/>
<path d="M79,13.5 L79,28.5" stroke="#222" stroke-width="2.6"/><path d="M79,13.5 L79,28.5" stroke="#f4f4f4" stroke-width="1.2"/>
<path d="M80.5,15 C84,13 87,17 94,15.5 L92,19.5 L94,22.5 C87,24 84,20 80.5,22 Z" fill="#f8f8f8" stroke="#333" stroke-width="0.9"/>
</svg>
<div class="a" style="left:1297px;top:733px;font-size:12px;line-height:15px;color:#fff;text-shadow:0 0 2px rgba(80,80,80,0.5)">11:57</div>
<div class="a" style="left:1281px;top:751px;font-size:12px;line-height:15px;color:#fff;text-shadow:0 0 2px rgba(80,80,80,0.5)">26/11/2557</div>
<div class="a" style="left:1352px;top:729px;width:14px;height:39px;border-left:1px solid #8a888e;background:linear-gradient(90deg,#c8c6cc,#b6b4ba)"></div>
</body></html>
